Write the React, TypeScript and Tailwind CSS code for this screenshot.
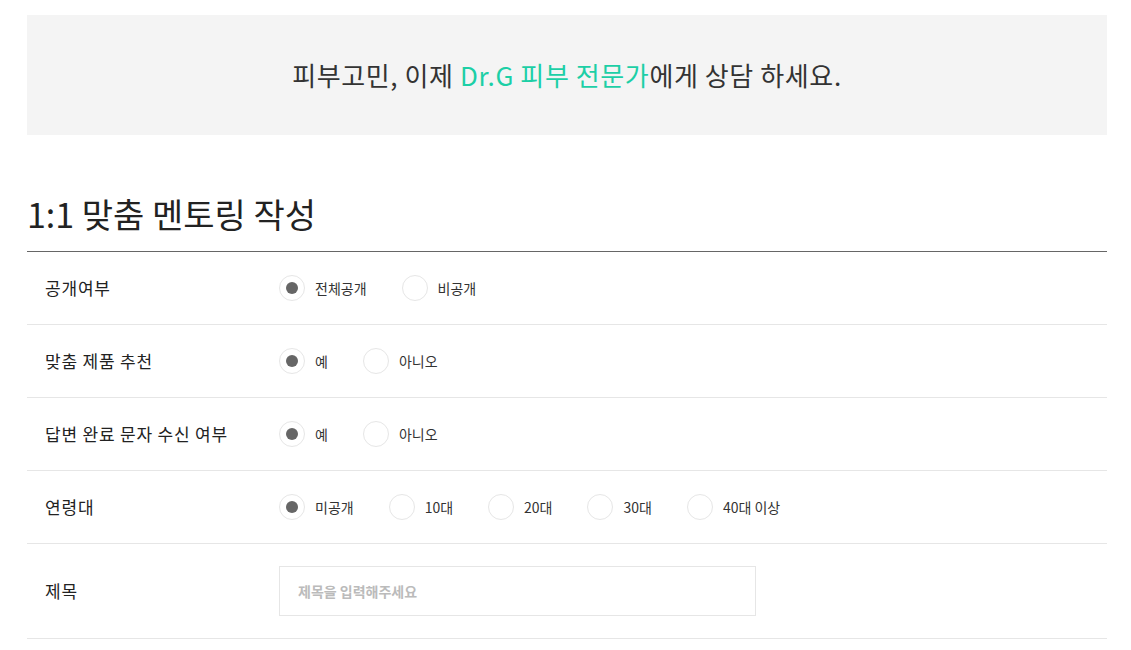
import React from "react";

const font = { fontFamily: '"Noto Sans CJK KR", "Noto Sans", sans-serif' };

function Radio({ label, checked }: { label: string; checked?: boolean }) {
  return (
    <label className="flex items-center mr-[35px]">
      <span className="w-[26px] h-[26px] rounded-full border border-[#e6e6e6] bg-white flex items-center justify-center">
        {checked && <span className="w-[12px] h-[12px] rounded-full bg-[#666666]" />}
      </span>
      <span className="ml-[10px] text-[14px] text-[#333]">{label}</span>
    </label>
  );
}

function Row({ label, children, last }: { label: string; children: React.ReactNode; last?: boolean }) {
  return (
    <div className={`flex items-center border-b border-[#e6e6e6] ${last ? "py-[22px]" : "h-[73px]"}`}>
      <div className="w-[252px] pl-[18px] text-[17px] tracking-[0.8px] text-[#222]">{label}</div>
      <div className="flex items-center">{children}</div>
    </div>
  );
}

export default function App() {
  return (
    <div className="bg-white min-h-[650px] pl-[27px] pr-[24px] pt-[15px]" style={font}>
      <div className="h-[120px] bg-[#f4f4f4] flex items-center justify-center">
        <p className="text-[26px] font-normal tracking-[0.6px] text-[#333] leading-none">
          피부고민, 이제 <span className="text-[#1ccfa6]">Dr.G 피부 전문가</span>에게 상담 하세요.
        </p>
      </div>
      <h2 className="mt-[58px] text-[34px] font-normal text-[#222] leading-[42px] pb-[16px] border-b border-[#666]">
        1:1 맞춤 멘토링 작성
      </h2>
      <Row label="공개여부">
        <Radio label="전체공개" checked />
        <Radio label="비공개" />
      </Row>
      <Row label="맞춤 제품 추천">
        <Radio label="예" checked />
        <Radio label="아니오" />
      </Row>
      <Row label="답변 완료 문자 수신 여부">
        <Radio label="예" checked />
        <Radio label="아니오" />
      </Row>
      <Row label="연령대">
        <Radio label="미공개" checked />
        <Radio label="10대" />
        <Radio label="20대" />
        <Radio label="30대" />
        <Radio label="40대 이상" />
      </Row>
      <Row label="제목" last>
        <input
          className="w-[477px] h-[50px] border border-[#e6e6e6] px-[18px] text-[14px] font-bold placeholder:text-[#bbbbbb] outline-none"
          placeholder="제목을 입력해주세요"
          style={font}
        />
      </Row>
    </div>
  );
}
